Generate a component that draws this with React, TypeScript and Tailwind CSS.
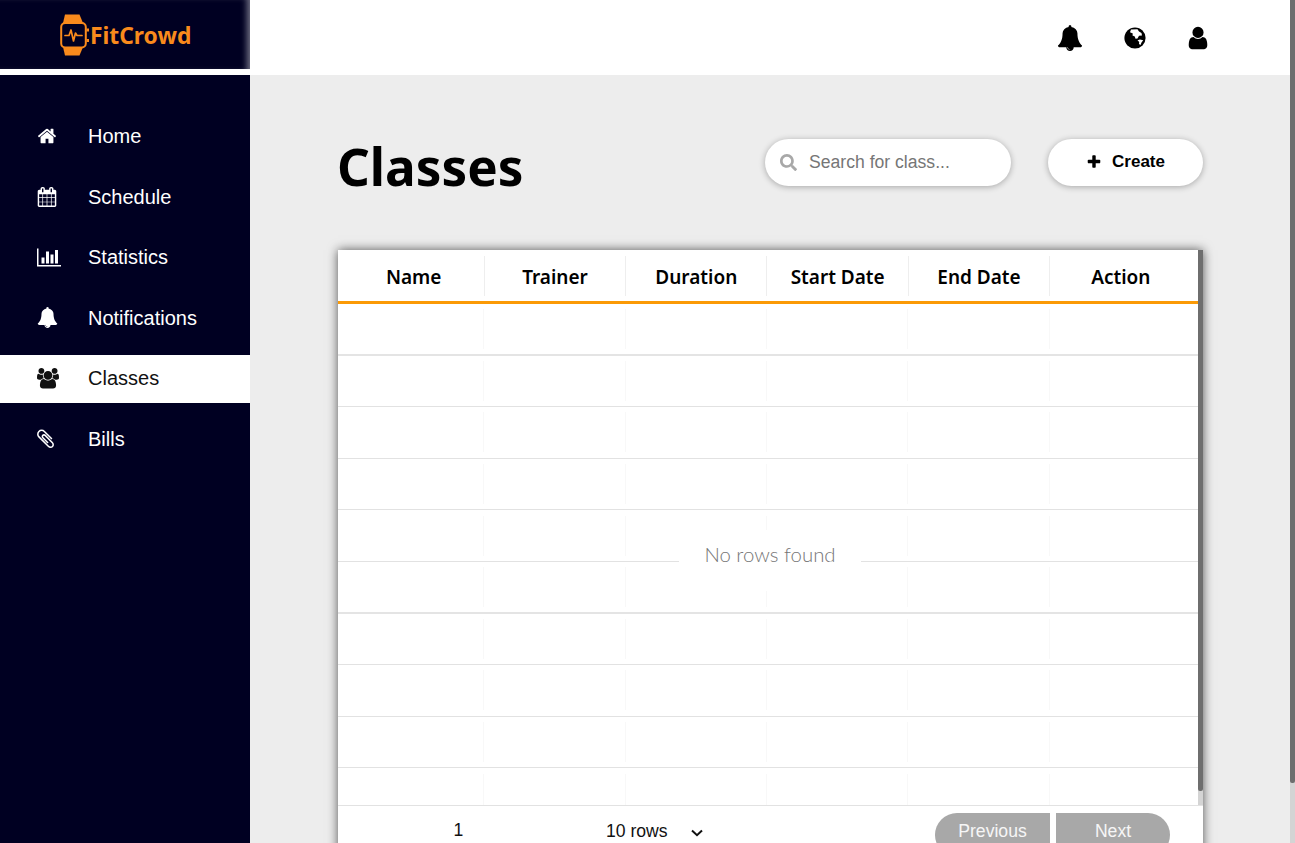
import React from 'react';
import { FaSearch } from 'react-icons/fa';

// font awesome 4 glyphs, the 5 set in react-icons draws these differently
const paths = {
  home: 'M1472 992v480q0 26-19 45t-45 19h-384v-384h-256v384h-384q-26 0-45-19t-19-45v-480q0-1 .5-3t.5-3l575-474 575 474q1 2 1 6zm223-69l-62 74q-8 9-21 11h-3q-13 0-21-7l-692-577-692 577q-12 8-24 7-13-2-21-11l-62-74q-8-10-7-23.5t11-21.5l719-599q32-26 76-26t76 26l244 204v-195q0-14 9-23t23-9h192q14 0 23 9t9 23v408l219 182q10 8 11 21.5t-7 23.5z',
  calendar: 'M192 1664h288v-288h-288v288zm352 0h320v-288h-320v288zm-352-352h288v-320h-288v320zm352 0h320v-320h-320v320zm-352-384h288v-288h-288v288zm736 736h320v-288h-320v288zm-384-736h320v-288h-320v288zm768 736h288v-288h-288v288zm-384-352h320v-320h-320v320zm-352-864v-288q0-13-9.5-22.5t-22.5-9.5h-64q-13 0-22.5 9.5t-9.5 22.5v288q0 13 9.5 22.5t22.5 9.5h64q13 0 22.5-9.5t9.5-22.5zm736 864h288v-320h-288v320zm-384-384h320v-288h-320v288zm384 0h288v-288h-288v288zm32-480v-288q0-13-9.5-22.5t-22.5-9.5h-64q-13 0-22.5 9.5t-9.5 22.5v288q0 13 9.5 22.5t22.5 9.5h64q13 0 22.5-9.5t9.5-22.5zm384-64v1280q0 52-38 90t-90 38h-1408q-52 0-90-38t-38-90v-1280q0-52 38-90t90-38h128v-96q0-66 47-113t113-47h64q66 0 113 47t47 113v96h384v-96q0-66 47-113t113-47h64q66 0 113 47t47 113v96h128q52 0 90 38t38 90z',
  chart: 'M640 896v512h-256v-512h256zm384-512v1024h-256v-1024h256zm1024 1152v128h-2048v-1536h128v1408h1920zm-640-896v768h-256v-768h256zm384-384v1152h-256v-1152h256z',
  bell: 'M912 1696q0-16-16-16-59 0-101.5-42.5t-42.5-101.5q0-16-16-16t-16 16q0 73 51.5 124.5t124.5 51.5q16 0 16-16zm816-288q0 52-38 90t-90 38h-448q0 106-75 181t-181 75-181-75-75-181h-448q-52 0-90-38t-38-90q50-42 91-88t85-119.5 74.5-158.5 50-206 19.5-260q0-152 117-282.5t307-158.5q-8-19-8-39 0-40 28-68t68-28 68 28 28 68q0 20-8 39 190 28 307 158.5t117 282.5q0 139 19.5 260t50 206 74.5 158.5 85 119.5 91 88z',
  users: 'M593 896q-162 5-265 128h-134q-82 0-138-40.5t-56-118.5q0-353 124-353 6 0 43.5 21t97.5 42.5 119 21.5q67 0 133-23-5 37-5 66 0 139 81 256zm1071 637q0 120-73 189.5t-194 69.5h-874q-121 0-194-69.5t-73-189.5q0-53 3.5-103.5t14-109 26.5-108.5 43-97.5 62-81 85.5-53.5 111.5-20q10 0 43 21.5t73 48 107 48 135 21.5 135-21.5 107-48 73-48 43-21.5q61 0 111.5 20t85.5 53.5 62 81 43 97.5 26.5 108.5 14 109 3.5 103.5zm-1024-1277q0 106-75 181t-181 75-181-75-75-181 75-181 181-75 181 75 75 181zm704 384q0 159-112.5 271.5t-271.5 112.5-271.5-112.5-112.5-271.5 112.5-271.5 271.5-112.5 271.5 112.5 112.5 271.5zm576 225q0 78-56 118.5t-138 40.5h-134q-103-123-265-128 81-117 81-256 0-29-5-66 66 23 133 23 59 0 119-21.5t97.5-42.5 43.5-21q124 0 124 353zm-128-609q0 106-75 181t-181 75-181-75-75-181 75-181 181-75 181 75 75 181z',
  clip: 'M1404 1385q0 117-79 196t-196 79q-135 0-235-100l-777-776q-113-115-113-271 0-159 110-270t269-111q158 0 273 113l605 606q10 10 10 22 0 16-30.5 46.5t-46.5 30.5q-13 0-23-10l-606-607q-79-77-181-77-106 0-179 75t-73 181q0 105 76 181l776 777q63 63 145 63 64 0 106-42t42-106q0-82-63-145l-581-581q-26-24-60-24-29 0-48 19t-19 48q0 32 25 59l410 410q10 10 10 22 0 16-31 47t-47 31q-12 0-22-10l-410-410q-63-61-63-149 0-82 57-139t139-57q88 0 149 63l581 581q100 98 100 235z',
  user: 'M1536 1399q0 109-62.5 187t-150.5 78h-854q-88 0-150.5-78t-62.5-187q0-85 8.5-160.5t31.5-152 58.5-131 94-89 134.5-34.5q131 128 313 128t313-128q76 0 134.5 34.5t94 89 58.5 131 31.5 152 8.5 160.5zm-256-887q0 159-112.5 271.5t-271.5 112.5-271.5-112.5-112.5-271.5 112.5-271.5 271.5-112.5 271.5 112.5 112.5 271.5z',
  plus: 'M1600 736v192q0 40-28 68t-68 28h-416v416q0 40-28 68t-68 28h-192q-40 0-68-28t-28-68v-416h-416q-40 0-68-28t-28-68v-192q0-40 28-68t68-28h416v-416q0-40 28-68t68-28h192q40 0 68 28t28 68v416h416q40 0 68 28t28 68z',
};

type IconProps = { d: string; box?: number; size: number; className?: string };

const Icon = ({ d, box = 1792, size, className }: IconProps) => (
  <svg width={size} height={(size * 1792) / box} viewBox={`0 0 ${box} 1792`} fill="currentColor" className={className}>
    <path d={d} />
  </svg>
);

const Globe = () => (
  <svg width="22" height="22" viewBox="0 0 22 22" className="ml-[41px]">
    <circle cx="11" cy="11" r="10.6" fill="#000" />
    <path d="M7 2.5L13.5 2.2L15 4.5L17.5 6L18 8.5L15 8.8L13.5 11.5L11.5 11.8L10.8 9.5L8.5 8.5L8.8 6.5L6 5.2Z" fill="#fff" />
    <path d="M13.5 13.2L16 12.6L19.2 13.2L17.5 15.5L16.5 18L15 17L15.2 15Z" fill="#fff" />
  </svg>
);

const navItems = [
  { label: 'Home', d: paths.home, size: 20 },
  { label: 'Schedule', d: paths.calendar, size: 20 },
  { label: 'Statistics', d: paths.chart, box: 2048, size: 24 },
  { label: 'Notifications', d: paths.bell, size: 21 },
  { label: 'Classes', d: paths.users, box: 1920, size: 22, active: true },
  { label: 'Bills', d: paths.clip, box: 1408, size: 17 },
];

const columns = ['Name', 'Trainer', 'Duration', 'Start Date', 'End Date', 'Action'];
const rows = [0, 1, 2, 3, 4, 5, 6, 7, 8, 9];

const WatchLogo = () => (
  <svg width="30" height="42" viewBox="0 0 30 42" fill="none" className="shrink-0">
    {/* straps */}
    <path d="M5 0.5H19.5L23 9H3Z" fill="#f98a1c" />
    <path d="M3 33H23L19.5 41.5H5Z" fill="#f98a1c" />
    {/* case */}
    <rect x="1.2" y="9" width="24.6" height="24.5" rx="4" stroke="#f98a1c" strokeWidth="2" fill="#000022" />
    <path d="M26.5 14.5h2.5v3h-2.5zM26.5 25h2.5v3h-2.5z" fill="#f98a1c" />
    {/* pulse */}
    <path d="M5 21.5H9L11 16L13.5 27L15.5 19L17 21.5H22" stroke="#f98a1c" strokeWidth="1.7" strokeLinejoin="round" strokeLinecap="round" />
  </svg>
);

const Sidebar = () => (
  <aside className="w-[250px] shrink-0 bg-[#000022] font-['Liberation_Sans',sans-serif]">
    <div className="h-[69px] flex items-center pl-[60px] shadow-[inset_-7px_0_6px_-4px_rgba(255,255,255,0.45)]">
      <WatchLogo />
      <span className="pt-[3px] font-['Noto_Sans',sans-serif] font-bold text-[22.8px] leading-none text-[#f98a1c]">FitCrowd</span>
    </div>
    <div className="h-[6px] bg-white" />
    <nav className="pt-[37.2px] flex flex-col gap-[12.6px]">
      {navItems.map((item) => (
        <a
          key={item.label}
          className={
            item.active
              ? 'h-[48px] flex items-center bg-white text-[#111] text-[20px]'
              : 'h-[48px] flex items-center text-white text-[20px]'
          }
        >
          <span className="w-[88px] pl-[37px]">
            <Icon d={item.d} box={item.box} size={item.size} />
          </span>
          <span className={item.active ? 'pb-[2px]' : ''}>{item.label}</span>
        </a>
      ))}
    </nav>
  </aside>
);

const Topbar = () => (
  <header className="h-[75px] shrink-0 bg-white flex items-center justify-end pr-[79px] text-black">
    <Icon d={paths.bell} size={26} />
    <Globe />
    <Icon d={paths.user} size={26} className="ml-[39px]" />
  </header>
);

const ClassesTable = () => (
  <div className="relative mt-[64px] bg-white shadow-[0_0_10px_rgba(0,0,0,0.65)]">
    {/* header */}
    <div className="pr-[11.5px] pl-[5.5px] h-[54px] border-b-[3px] border-[#fb9a06] grid grid-cols-6 items-center">
      {columns.map((col, i) => (
        <div
          key={col}
          className={
            i < 5
              ? 'h-[40px] pt-[4px] flex items-center justify-center border-r border-[#eeeeee] font-["Noto_Sans",sans-serif] font-semibold text-[19px] text-black'
              : 'h-[40px] pt-[4px] flex items-center justify-center font-["Noto_Sans",sans-serif] font-semibold text-[19px] text-black'
          }
        >
          {col}
        </div>
      ))}
    </div>

    {/* empty rows */}
    <div className="h-[501px] overflow-hidden">
      {rows.map((r) => (
        <div
          key={r}
          className={
            r === 0 || r === 5
              ? 'pr-[12px] pl-[5px] h-[51.6px] border-b-2 border-[#e4e4e4] grid grid-cols-6 items-center'
              : 'pr-[12px] pl-[5px] h-[51.6px] border-b border-[#e2e2e2] grid grid-cols-6 items-center'
          }
        >
          {columns.map((col, i) => (
            <div key={col} className={i < 5 ? 'h-[40px] border-r border-[#f8f8f8]' : 'h-[40px]'} />
          ))}
        </div>
      ))}
    </div>

    {/* no rows overlay */}
    <div className="absolute left-[341px] top-[280px] w-[182px] h-[61px] bg-white flex justify-center pt-[9px] font-['Lato',sans-serif] font-light text-[20.4px] leading-[30px] text-[#767676]">
      No rows found
    </div>

    {/* table scrollbar */}
    <div className="absolute right-0 top-0 h-[555px] w-[5px] bg-[#d4d4d4] rounded-tr-[2px]">
      <div className="h-[541px] bg-[#6e6e6e] rounded-b-[2px]" />
    </div>

    {/* footer */}
    <div className="h-[60px] border-t border-[#e2e2e2] flex items-start font-['Liberation_Sans',sans-serif] text-[17.6px] text-[#111]">
      <div className="w-[241px] text-center pt-[12px] leading-[24px]">1</div>
      <div className="ml-[27px] pt-[13px] leading-[24px]">10 rows</div>
      <svg width="12" height="8" viewBox="0 0 12 8" fill="none" className="ml-[23px] mt-[23px]">
        <path d="M1 1.5L6 6.2L11 1.5" stroke="#111" strokeWidth="2" />
      </svg>
      <div className="ml-auto mr-[33px] mt-[7px] flex gap-[6px] text-white/90">
        <div className="w-[115px] h-[44px] pt-[5px] text-center bg-[#a8a8a8] rounded-l-[22px]">Previous</div>
        <div className="w-[114px] h-[44px] pt-[5px] text-center bg-[#a8a8a8] rounded-r-[22px]">Next</div>
      </div>
    </div>
  </div>
);

export default function App() {
  return (
    <div className="relative h-screen flex overflow-hidden bg-[#ededed]">
      <Sidebar />
      <main className="flex-1 min-w-0 flex flex-col pr-[5px]">
        <Topbar />
        <section className="pl-[88px] pr-[87px] pt-[64px]">
          <div className="flex items-start h-[47px]">
            <h1 className="-ml-px font-['Noto_Sans',sans-serif] font-bold text-[51.2px] leading-[54px] text-black">Classes</h1>
            <label className="ml-auto w-[246px] h-[47px] rounded-full bg-white shadow-[0_1px_6px_rgba(0,0,0,0.3)] flex items-center pl-[15px] gap-[12px]">
              <FaSearch className="text-[17px] text-[#a8a8a8]" />
              <span className="font-['Liberation_Sans',sans-serif] text-[17.6px] text-[#767676]">Search for class...</span>
            </label>
            <button className="ml-[37px] w-[155px] h-[47px] pb-[1px] rounded-full bg-white shadow-[0_1px_6px_rgba(0,0,0,0.3)] flex items-center justify-center gap-[10px] font-['Liberation_Sans',sans-serif] font-bold text-[17px] text-black">
              <Icon d={paths.plus} size={16} />
              Create
            </button>
          </div>
          <ClassesTable />
        </section>
      </main>

      {/* page scrollbar */}
      <div className="absolute right-0 top-0 h-full w-[5px] bg-[#d4d4d4]">
        <div className="h-[783px] bg-[#6e6e6e] rounded-b-[2px]" />
      </div>
    </div>
  );
}
